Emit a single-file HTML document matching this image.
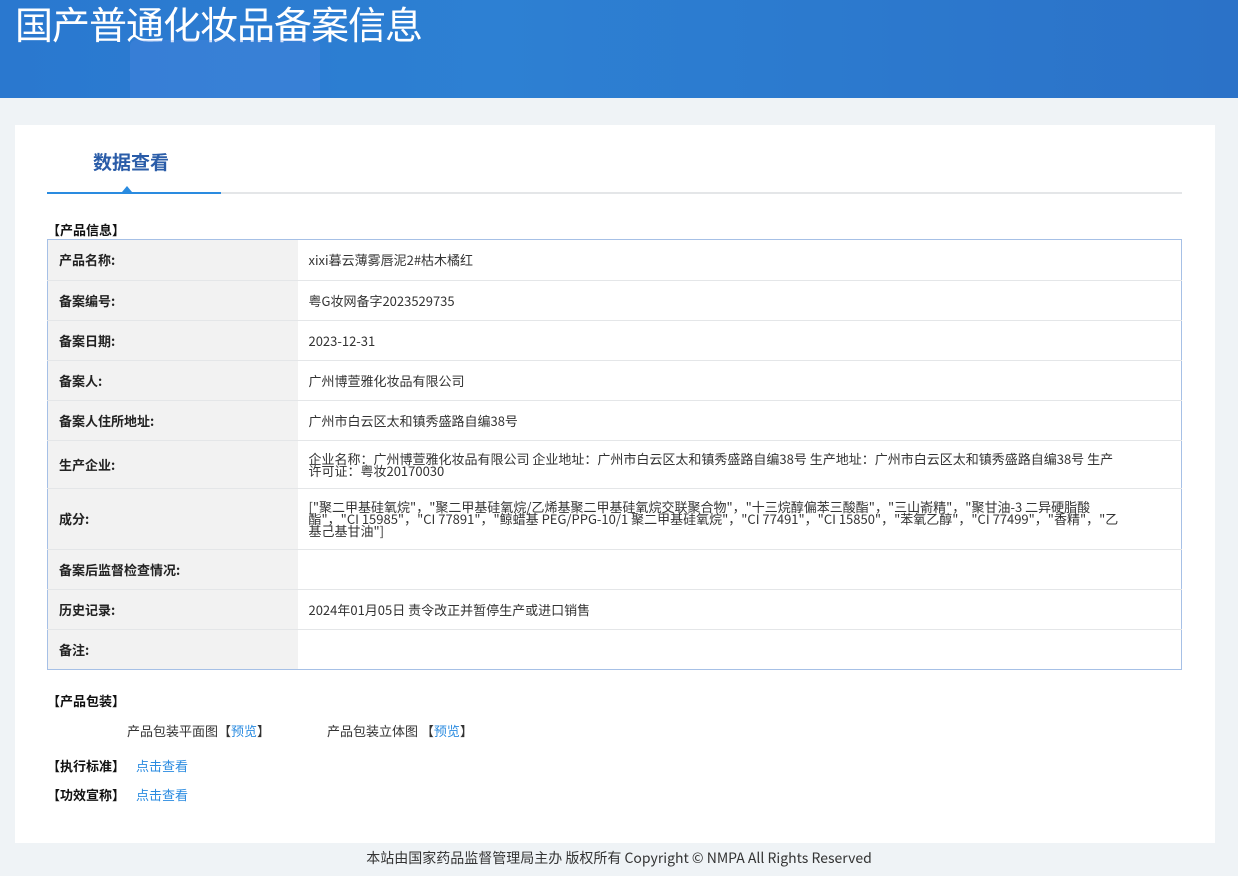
<!DOCTYPE html>
<html><head><meta charset="utf-8"><style>
*{margin:0;padding:0;box-sizing:border-box}
body{width:1238px;height:876px;background:#eff3f6;font-family:"Noto Sans CJK SC","Liberation Sans",sans-serif;font-size:13px;color:#333;position:relative;overflow:hidden}
.hd{position:absolute;left:0;top:0;width:1238px;height:98px;background:linear-gradient(90deg,#2a78cf 0%,#2d80d3 40%,#2b72c8 100%);overflow:hidden}
.hd h1{position:absolute;left:15px;top:0px;font-size:38px;font-weight:normal;color:#fff;font-family:"Noto Sans CJK SC",sans-serif;line-height:46px;letter-spacing:-1px}
.card{position:absolute;left:15px;top:125px;width:1200px;height:718px;background:#fff}
.tab{position:absolute;left:93px;top:148px;font-size:19px;font-weight:bold;color:#2a5ca8}
.line{position:absolute;left:47px;top:192px;width:1135px;height:2px;background:#e4e6e8}
.line2{position:absolute;left:47px;top:192px;width:174px;height:2px;background:#2a8be0}
.tri{position:absolute;left:122px;top:186px;width:0;height:0;border-left:5px solid transparent;border-right:5px solid transparent;border-bottom:6px solid #2a8be0}
.sec{position:absolute;font-weight:bold;color:#111;font-size:13px}
table{position:absolute;left:47px;top:239px;width:1135px;border-collapse:collapse;border:1px solid #a6c0e6}
td{border-top:1px solid #e4e6e8;padding:0 11px;line-height:12px;font-size:13px}
td.l{width:250px;background:#f2f2f2;font-weight:bold;color:#222}
td.v{color:#333;padding-right:58px}
a{color:#2a8be0;text-decoration:none}
.ft{position:absolute;top:848px;left:0;width:1238px;text-align:center;font-size:14px;color:#333}
</style></head><body>
<div class="hd"><h1>国产普通化妆品备案信息</h1>
<div style="position:absolute;left:130px;top:40px;width:190px;height:70px;background:rgba(90,140,230,.25);border-radius:6px"></div>
</div>
<div class="card"></div>
<div class="tab">数据查看</div>
<div class="line"></div><div class="line2"></div><div class="tri"></div>
<div class="sec" style="left:47px;top:220px">【产品信息】</div>
<table>
<tr style="height:41px"><td class="l" style="border-top:0">产品名称:</td><td class="v" style="border-top:0">xixi暮云薄雾唇泥2#枯木橘红</td></tr>
<tr style="height:40px"><td class="l">备案编号:</td><td class="v">粤G妆网备字2023529735</td></tr>
<tr style="height:40px"><td class="l">备案日期:</td><td class="v">2023-12-31</td></tr>
<tr style="height:40px"><td class="l">备案人:</td><td class="v">广州博萱雅化妆品有限公司</td></tr>
<tr style="height:40px"><td class="l">备案人住所地址:</td><td class="v">广州市白云区太和镇秀盛路自编38号</td></tr>
<tr style="height:48px"><td class="l">生产企业:</td><td class="v">企业名称：广州博萱雅化妆品有限公司 企业地址：广州市白云区太和镇秀盛路自编38号 生产地址：广州市白云区太和镇秀盛路自编38号 生产许可证：粤妆20170030</td></tr>
<tr style="height:61px"><td class="l">成分:</td><td class="v">["聚二甲基硅氧烷"，"聚二甲基硅氧烷/乙烯基聚二甲基硅氧烷交联聚合物"，"十三烷醇偏苯三酸酯"，"三山嵛精"，"聚甘油-3 二异硬脂酸酯"，"CI 15985"，"CI 77891"，"鲸蜡基 PEG/PPG-10/1 聚二甲基硅氧烷"，"CI 77491"，"CI 15850"，"苯氧乙醇"，"CI 77499"，"香精"，"乙基己基甘油"]</td></tr>
<tr style="height:40px"><td class="l">备案后监督检查情况:</td><td class="v"></td></tr>
<tr style="height:40px"><td class="l">历史记录:</td><td class="v">2024年01月05日 责令改正并暂停生产或进口销售</td></tr>
<tr style="height:40px"><td class="l">备注:</td><td class="v"></td></tr>
</table>
<div class="sec" style="left:47px;top:691px">【产品包装】</div>
<div style="position:absolute;left:127px;top:721px">产品包装平面图【<a>预览</a>】</div>
<div style="position:absolute;left:327px;top:721px">产品包装立体图 【<a>预览</a>】</div>
<div class="sec" style="left:47px;top:756px">【执行标准】 <a style="font-weight:normal;margin-left:8px">点击查看</a></div>
<div class="sec" style="left:47px;top:785px">【功效宣称】 <a style="font-weight:normal;margin-left:8px">点击查看</a></div>
<div class="ft">本站由国家药品监督管理局主办 版权所有 Copyright © NMPA All Rights Reserved</div>
</body></html>
